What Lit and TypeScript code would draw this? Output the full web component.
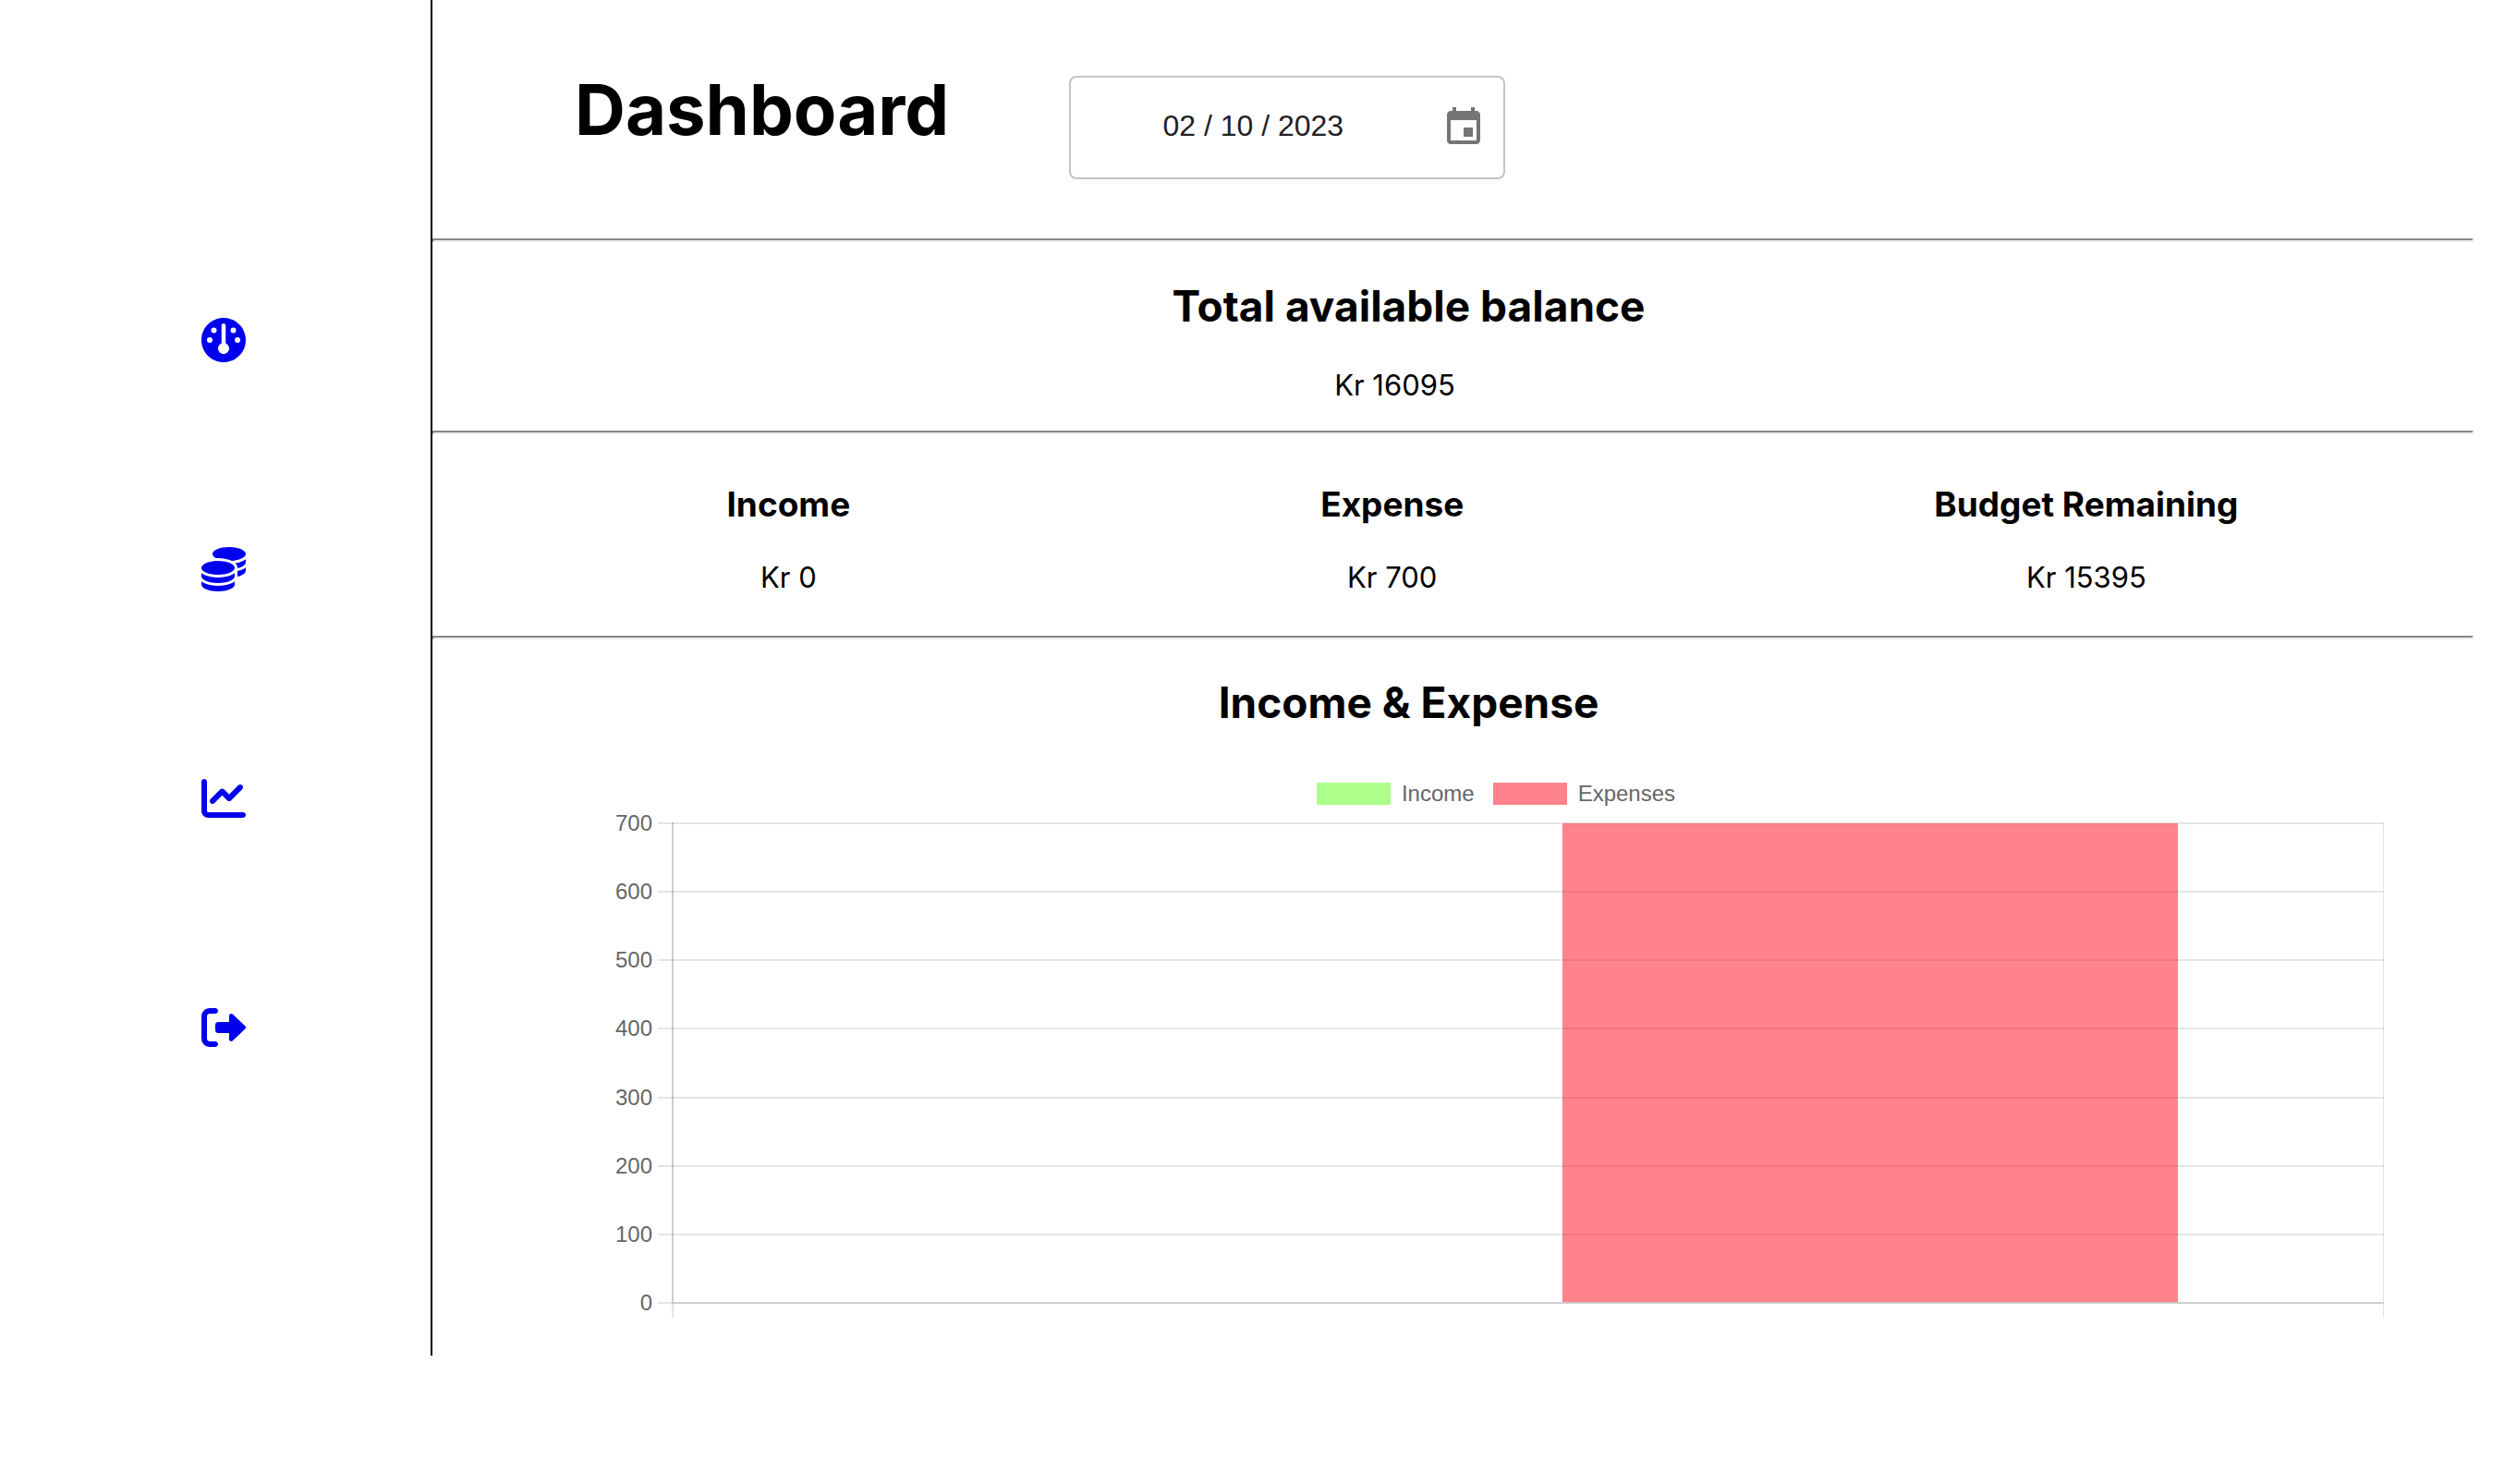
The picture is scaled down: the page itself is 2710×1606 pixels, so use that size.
import { LitElement, html, css, svg } from "lit";
import { customElement, property } from "lit/decorators.js";

const NAV_ITEMS = [
  {
    label: "Dashboard",
    href: "#dashboard",
    path: "M512 256C512 397.4 397.4 512 256 512C114.6 512 0 397.4 0 256C0 114.6 114.6 0 256 0C397.4 0 512 114.6 512 256zM280 292.7V88C280 74.7 269.3 64 256 64C242.7 64 232 74.7 232 88V292.7C208.5 302.1 192 325.1 192 352C192 387.3 220.7 416 256 416C291.3 416 320 387.3 320 352C320 325.1 303.5 302.1 280 292.7zM144 112a32 32 0 1 0 0 64a32 32 0 1 0 0-64zM96 224a32 32 0 1 0 0 64a32 32 0 1 0 0-64zM416 224a32 32 0 1 0 0 64a32 32 0 1 0 0-64zM368 112a32 32 0 1 0 0 64a32 32 0 1 0 0-64z",
  },
  {
    label: "Transactions",
    href: "#transactions",
    path: "M512 80c0 18-14.3 34.6-38.4 48c-29.1 16.1-72.5 27.5-122.3 30.9c-3.7-1.8-7.4-3.5-11.3-5C300.6 137.4 248.2 128 192 128c-8.3 0-16.4 .2-24.5 .6l-1.1-.6C142.3 114.6 128 98 128 80c0-44.2 86-80 192-80S512 35.8 512 80zM160.7 161.1c10.2-.7 20.7-1.1 31.3-1.1c62.2 0 117.4 12.3 152.5 31.4C369.3 204.9 384 221.7 384 240c0 4-.7 7.9-2.1 11.7c-4.6 13.2-17 25.3-35 35.5c-.1 .1-.3 .1-.4 .2c-.3 .2-.6 .3-.9 .5c-35 19.4-90.8 32-153.6 32c-59.6 0-112.9-11.3-148.2-29.1c-1.9-.9-3.7-1.9-5.5-2.9C14.3 274.6 0 258 0 240c0-34.8 53.4-64.5 128-75.4c10.5-1.5 21.4-2.7 32.7-3.5zM416 240c0-21.9-10.6-39.9-24.1-53.4c28.3-4.4 54.2-11.4 76.2-20.5c16.3-6.8 31.5-15.2 43.9-25.5V176c0 19.3-16.5 37.1-43.8 50.9c-14.6 7.4-32.4 13.7-52.4 18.5c.1-1.8 .2-3.5 .2-5.3zm-32 96c0 18-14.3 34.6-38.4 48c-1.8 1-3.6 1.9-5.5 2.9C304.9 404.7 251.6 416 192 416c-62.8 0-118.6-12.6-153.6-32C14.3 370.6 0 354 0 336V300.6c12.5 10.3 27.6 18.7 43.9 25.5C83.4 342.6 135.8 352 192 352s108.6-9.4 148.1-25.9c7.8-3.2 15.3-6.9 22.4-10.9c6.1-3.4 11.8-7.2 17.2-11.2c1.5-1.1 2.9-2.3 4.3-3.4V336zm32 0V278.1c19-4.2 36.5-9.5 52.1-16c16.3-6.8 31.5-15.2 43.9-25.5V272c0 10.5-5 21-14.9 30.9c-16.3 16.3-45 29.7-81.3 38.4c.1-1.7 .2-3.5 .2-5.3zM192 448c56.2 0 108.6-9.4 148.1-25.9c16.3-6.8 31.5-15.2 43.9-25.5V432c0 44.2-86 80-192 80S0 476.2 0 432V396.6c12.5 10.3 27.6 18.7 43.9 25.5C83.4 438.6 135.8 448 192 448z",
  },
  {
    label: "Statistics",
    href: "#statistics",
    path: "M64 64c0-17.7-14.3-32-32-32S0 46.3 0 64V400c0 44.2 35.8 80 80 80H480c17.7 0 32-14.3 32-32s-14.3-32-32-32H80c-8.8 0-16-7.2-16-16V64zm406.6 86.6c12.5-12.5 12.5-32.8 0-45.3s-32.8-12.5-45.3 0L320 210.7l-57.4-57.4c-12.5-12.5-32.8-12.5-45.3 0l-112 112c-12.5 12.5-12.5 32.8 0 45.3s32.8 12.5 45.3 0L240 221.3l57.4 57.4c12.5 12.5 32.8 12.5 45.3 0l128-128z",
  },
  {
    label: "Log out",
    href: "#logout",
    path: "M96 480h64C177.7 480 192 465.7 192 448S177.7 416 160 416H96c-17.67 0-32-14.33-32-32V128c0-17.67 14.33-32 32-32h64C177.7 96 192 81.67 192 64S177.7 32 160 32H96C42.98 32 0 74.98 0 128v256C0 437 42.98 480 96 480zM504.8 238.5l-144.1-136c-6.975-6.578-17.2-8.375-26-4.594c-8.803 3.797-14.51 12.47-14.51 22.05l-.0918 72l-128-.001c-17.69 0-32.02 14.33-32.02 32v64c0 17.67 14.34 32 32.02 32l128 .001l.0918 71.1c0 9.578 5.707 18.25 14.51 22.05c8.803 3.781 19.03 1.984 26-4.594l144.1-136C514.4 264.4 514.4 247.6 504.8 238.5z",
  },
];

@customElement("side-nav")
export class SideNav extends LitElement {
  static styles = css`
    :host {
      display: block;
    }
    .list {
      display: flex;
      flex-direction: column;
      align-items: center;
      gap: 200px;
      margin: 0;
      padding: 344px 0 0 18px;
      list-style: none;
    }
    .link {
      display: block;
      color: #0000ee;
    }
    .icon {
      display: block;
      width: 48px;
      height: 48px;
      fill: currentColor;
      fill-rule: evenodd;
    }
  `;

  render() {
    return html`
      <nav aria-label="Main">
        <ul class="list">
          ${NAV_ITEMS.map(
            (item) => html`
              <li>
                <a class="link" href=${item.href} aria-label=${item.label}>
                  <svg class="icon" viewBox="0 0 512 512" aria-hidden="true">
                    ${svg`<path d=${item.path}></path>`}
                  </svg>
                </a>
              </li>
            `
          )}
        </ul>
      </nav>
    `;
  }
}

interface Series {
  name: string;
  value: number;
  color: string;
}

@customElement("bar-chart")
export class BarChart extends LitElement {
  @property({ attribute: false }) series: Series[] = [];
  @property({ type: Number }) max = 700;
  @property({ type: Number }) step = 100;

  static styles = css`
    :host {
      display: block;
      font: 24px/24px "Liberation Sans", Arial, sans-serif;
      color: #666;
    }
    .legend {
      display: flex;
      justify-content: center;
      gap: 20px;
      margin: 0 0 19px;
      padding: 0 6px 0 0;
      list-style: none;
    }
    .entry {
      display: flex;
      gap: 12px;
    }
    .swatch {
      width: 80px;
      height: 24px;
    }
    .body {
      display: grid;
      grid-template-columns: 42px minmax(0, 1fr);
      column-gap: 6px;
    }
    .ticks {
      display: flex;
      flex-direction: column;
      justify-content: space-between;
      height: 543px;
      margin: -11px 0 0;
      padding: 0;
      text-align: right;
      list-style: none;
    }
    .plot {
      display: grid;
      grid-template-columns: 15px minmax(0, 1fr);
      grid-template-rows: 521px 15px;
    }
    .grid,
    .area {
      grid-row: 1;
      display: flex;
    }
    .grid {
      grid-column: 1 / 3;
      flex-direction: column;
      justify-content: space-between;
    }
    .line {
      height: 2px;
      background: rgba(0, 0, 0, 0.1);
    }
    .area {
      grid-column: 2;
      align-items: flex-end;
      box-sizing: border-box;
      padding: 1px 10% 0;
      border: solid rgba(0, 0, 0, 0.1);
      border-width: 0 1px 2px 2px;
      border-left-color: rgba(0, 0, 0, 0.19);
    }
    .slot {
      display: flex;
      flex: 1;
      align-items: flex-end;
      justify-content: center;
      height: 100%;
    }
    .bar {
      width: 90%;
    }
    .foot {
      grid-row: 2;
      grid-column: 2;
      border: solid rgba(0, 0, 0, 0.1);
      border-width: 0 1px 0 2px;
    }
  `;

  render() {
    const ticks: number[] = [];
    for (let v = this.max; v >= 0; v -= this.step) ticks.push(v);
    return html`
      <ul class="legend">
        ${this.series.map(
          (s) => html`
            <li class="entry">
              <span class="swatch" style="background:${s.color}"></span>${s.name}
            </li>
          `
        )}
      </ul>
      <div class="body">
        <ul class="ticks">
          ${ticks.map((t) => html`<li>${t}</li>`)}
        </ul>
        <div class="plot">
          <div class="grid">${ticks.map(() => html`<div class="line"></div>`)}</div>
          <div class="area">
            ${this.series.map(
              (s) => html`
                <div class="slot">
                  <div
                    class="bar"
                    style="height:${(s.value / this.max) * 100}%;background:${s.color}"
                  ></div>
                </div>
              `
            )}
          </div>
          <div class="foot"></div>
        </div>
      </div>
    `;
  }
}

@customElement("app-root")
export class AppRoot extends LitElement {
  static styles = css`
    :host {
      display: block;
      font: 31px/40px Inter, "Liberation Sans", sans-serif;
      color: #000;
      background: #fff;
    }
    .page {
      display: grid;
      grid-template-columns: 466px minmax(0, 1fr);
      padding-right: 33px;
    }
    .main {
      border-left: 2px solid #000;
      padding-bottom: 41px;
    }
    h1,
    h2,
    h3,
    p {
      margin: 0;
    }
    .rule {
      margin: 0;
      border: 2px solid;
      border-color: #888 #eee #eee #888;
    }
    .top {
      display: flex;
      align-items: flex-start;
      gap: 130px;
      padding: 70px 0 64px 154px;
    }
    .title {
      font-size: 76px;
      line-height: 96px;
    }
    .date {
      display: flex;
      align-items: center;
      box-sizing: border-box;
      width: 472px;
      height: 112px;
      margin-top: 12px;
      padding: 0 3px 0 9px;
      border: 2px solid #c4c4c4;
      border-radius: 8px;
    }
    .field {
      flex: 1;
      min-width: 0;
      padding: 0 0 4px;
      border: 0;
      outline: 0;
      background: none;
      color: #212121;
      font: 32px/46px "Liberation Sans", Arial, sans-serif;
      text-align: center;
    }
    .pick {
      display: block;
      padding: 16px;
      border: 0;
      background: none;
      color: #757575;
    }
    .calendar {
      display: block;
      width: 48px;
      height: 48px;
      fill: currentColor;
    }
    .heading {
      font-size: 46px;
      line-height: 56px;
      text-align: center;
      padding-right: 96px;
    }
    .balance {
      padding: 41px 0 29px;
    }
    .amount {
      margin-top: 38px;
      padding-right: 126px;
      text-align: center;
    }
    .totals {
      display: flex;
      justify-content: space-around;
      padding: 52px 0 43px 64px;
      text-align: center;
    }
    .label {
      font-size: 37px;
      line-height: 48px;
    }
    .value {
      margin-top: 35px;
    }
    .report {
      padding-top: 40px;
    }
    .chart {
      padding: 59px 97px 0 196px;
    }
  `;

  private series: Series[] = [
    { name: "Income", value: 0, color: "rgba(91, 255, 25, 0.5)" },
    { name: "Expenses", value: 700, color: "rgba(255, 5, 25, 0.5)" },
  ];

  private totals = [
    { label: "Income", value: "Kr 0" },
    { label: "Expense", value: "Kr 700" },
    { label: "Budget Remaining", value: "Kr 15395" },
  ];

  render() {
    return html`
      <div class="page">
        <side-nav></side-nav>
        <main class="main">
          <header class="top">
            <h1 class="title">Dashboard</h1>
            <div class="date">
              <input class="field" type="text" aria-label="Date" value="02 / 10 / 2023" />
              <button class="pick" type="button" aria-label="Choose date">
                <svg class="calendar" viewBox="0 0 24 24" aria-hidden="true">
                  <path
                    d="M17 12h-5v5h5v-5zM16 1v2H8V1H6v2H5c-1.11 0-1.99.9-1.99 2L3 19c0 1.1.89 2 2 2h14c1.1 0 2-.9 2-2V5c0-1.1-.9-2-2-2h-1V1h-2zm3 18H5V8h14v11z"
                  ></path>
                </svg>
              </button>
            </div>
          </header>
          <hr class="rule" />
          <section class="balance">
            <h2 class="heading">Total available balance</h2>
            <p class="amount">Kr 16095</p>
          </section>
          <hr class="rule" />
          <section class="totals">
            ${this.totals.map(
              (t) => html`
                <div>
                  <h3 class="label">${t.label}</h3>
                  <p class="value">${t.value}</p>
                </div>
              `
            )}
          </section>
          <hr class="rule" />
          <section class="report">
            <h2 class="heading">Income &amp; Expense</h2>
            <div class="chart"><bar-chart .series=${this.series}></bar-chart></div>
          </section>
        </main>
      </div>
    `;
  }
}
